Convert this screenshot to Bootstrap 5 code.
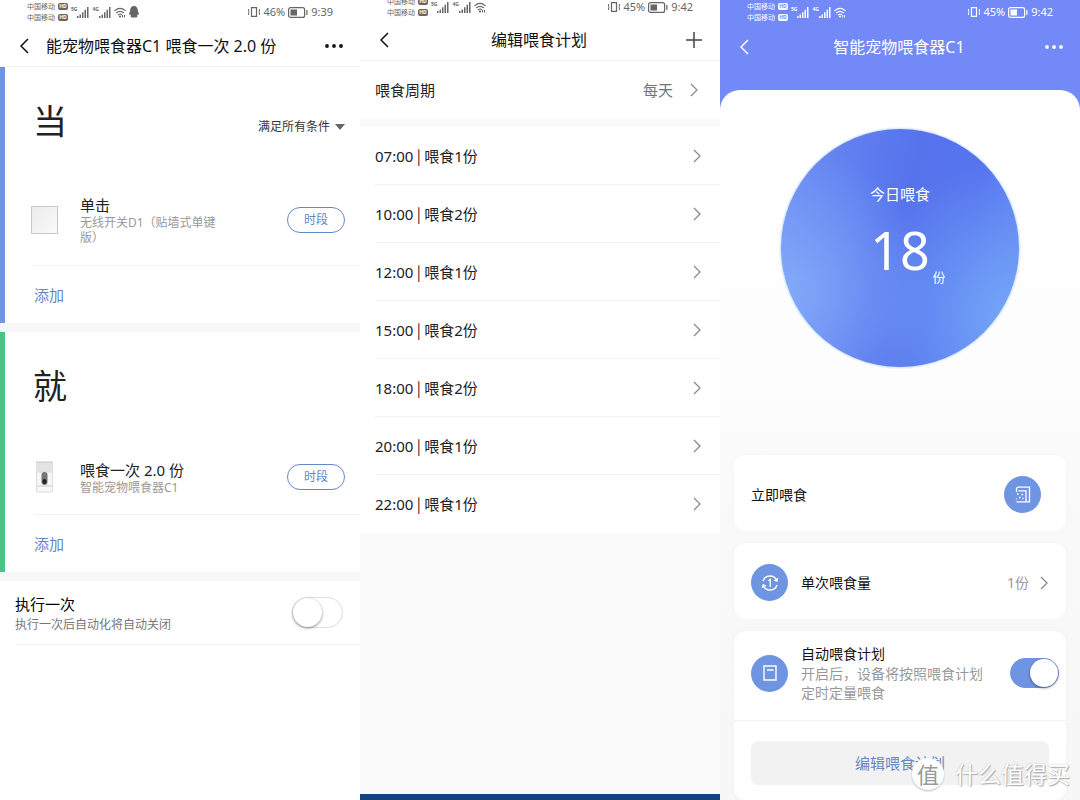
<!DOCTYPE html>
<html lang="zh-CN">
<head>
<meta charset="utf-8">
<meta name="viewport" content="width=device-width, initial-scale=1">
<title>智能宠物喂食器C1</title>
<link href="https://cdn.jsdelivr.net/npm/bootstrap@5.3.0/dist/css/bootstrap.min.css" rel="stylesheet">
<style>
  :root { --blue: #6f94e2; --link: #6487c6; --line: #f2f2f2; --gap: #f7f7f7; }
  body { font-family: "Noto Sans", "Noto Sans CJK SC", sans-serif; font-size: 15px; line-height: 20px; color: #222; }
  a { text-decoration: none; }
  svg { flex: none; display: block; }
  .phone { min-height: 100vh; background: #fff; }

  /* status bar */
  .status { height: 24px; padding: 0 27px; color: #666; font-size: 11px; }
  .status-short { height: 18px; padding-bottom: 4px; }
  .net, .power { display: flex; align-items: center; gap: 3px; }
  .signal { display: flex; align-items: center; }
  .carrier { font-size: 7px; line-height: 11px; white-space: nowrap; }
  .carrier div { display: flex; align-items: center; gap: 3px; }
  .hd { width: 10px; height: 7px; border-radius: 2px; background: currentColor; }
  .hd b { color: #fff; font-size: 5px; line-height: 7px; display: block; text-align: center; }
  .gen { font-size: 5px; line-height: 5px; font-weight: 700; padding-bottom: 6px; }

  /* title bar */
  .topbar { height: 43px; padding: 2px 16px 0 18px; border-bottom: 1px solid var(--line); color: #111; font-size: 16px; }
  .topbar button, .plain { border: 0; background: none; padding: 0; color: inherit; }
  .topbar h1 { font-size: 16px; line-height: 24px; font-weight: 400; margin: 0; white-space: nowrap; }
  .more { color: #555; }

  /* automation screen */
  .rule { border-left: 5px solid var(--blue); }
  .rule-then { border-color: #4bc382; }
  .rule-head { height: 108px; padding: 0 15px 0 28px; }
  .rule-head h2 { font-size: 34px; line-height: 40px; font-weight: 400; margin: 0; }
  .match { padding-top: 12px; }
  .match select { appearance: none; border: 0; background: none; padding: 0; font-size: 12px; line-height: 20px; color: #333; }
  .rule-item { height: 90px; padding-right: 15px; }
  .rule-then .rule-item { height: 74px; }
  .thumb { width: 75px; padding-left: 26px; flex: none; }
  .sub { font-size: 12px; line-height: 15px; color: #999; }
  .desc { width: 140px; }
  .pill { width: 58px; height: 26px; padding: 0; border: 1px solid var(--link); border-radius: 13px; background: #fff; color: var(--link); font-size: 12px; line-height: 16px; flex: none; }
  .rule-add { height: 58px; margin-left: 29px; border-top: 1px solid var(--line); }
  .rule-add a { color: var(--link); }
  .band { height: 9px; background: var(--gap); }
  .once { height: 64px; margin-left: 15px; padding-right: 17px; border-bottom: 1px solid var(--line); }
  .once .sub { line-height: 22px; color: #777; }

  /* switches */
  .toggle.form-check-input { appearance: none; width: 51px; height: 31px; margin: 0; border: 1px solid #ddd; border-radius: 16px; background: #fff; flex: none; display: block; }
  .toggle.form-check-input::before { content: ""; display: block; width: 29px; height: 29px; border-radius: 50%; background: #fff; box-shadow: 0 1px 3px rgba(0,0,0,.45); }
  .toggle.form-check-input:checked { width: 49px; height: 30px; background: var(--blue); border-color: var(--blue); }
  .toggle.form-check-input:checked::before { width: 28px; height: 28px; margin-left: auto; }

  /* schedule screen */
  .schedule { background: #fafafa; }
  .schedule .status, .schedule .topbar, .period, .plan { background: #fff; }
  .period { height: 58px; padding: 0 21px 0 15px; }
  .plan a { height: 58px; margin-left: 15px; padding-right: 18px; color: #222; border-bottom: 1px solid var(--line); }
  .plan li:last-child a { border-color: transparent; }
  .sep { font-family: "Noto Sans CJK SC", sans-serif; }
  .foot { height: 6px; background: #10467c; }

  /* device screen */
  .device { background: #7389f7; }
  .device .status { color: #fff; }
  .device .hd b { color: #7389f7; }
  .device .topbar { color: #fff; border: 0; }
  .sheet { margin-top: 23px; padding: 39px 14px 0; border-radius: 20px 20px 0 0; background: linear-gradient(#fff 0, #fdfdfd 280px, #f9f9f9 420px, #f7f7f7 100%); }
  .dial { width: 238px; height: 238px; margin: 0 auto 88px; padding-top: 55px; border-radius: 50%; color: #fff; text-align: center;
    background: radial-gradient(circle at 98% 78%, #74a6f8 0, rgba(116,166,248,0) 52%), radial-gradient(circle at 0 68%, #83aaf9 0, rgba(131,170,249,0) 52%), linear-gradient(100deg, #6d8df3 0, #5673ec 50%, #5674ee 75%, #6385f2 100%);
    box-shadow: 0 0 2px 1px #c8e0fc; }
  .count { font-size: 52px; line-height: 72px; margin-top: 10px; }
  .unit { font-size: 13px; line-height: 18px; padding-left: 78px; margin-top: -18px; }
  .tile { background: #fff; border-radius: 12px; box-shadow: 0 0 8px rgba(0,0,0,.025); font-size: 14px; color: #111; margin-bottom: 12px; }
  .tile-row { height: 76px; padding: 3px 17px 0; }
  .tile:last-child { margin-bottom: 0; }
  .tile-text { margin-left: 13px; }
  .amount { color: #999; margin-right: 10px; }
  .disc { width: 37px; height: 37px; border-radius: 50%; color: #fff; flex: none; display: grid; place-items: center; }
  .disc, .plain.disc { background: var(--blue); }
  .auto { padding: 13px 7px 18px 17px; border-bottom: 1px solid var(--line); }
  .auto .note { color: #999; line-height: 19px; }
  .plain.edit { height: 44px; margin: 20px 17px 15px; border-radius: 8px; background: #f2f2f2; color: var(--link); font-size: 15px; }

  .stamp { right: 10px; bottom: 10px; gap: 11px; color: #fff; font-size: 23px; line-height: 32px; text-shadow: 1px 1px 1px #aaa, 0 0 2px #bbb; z-index: 2; pointer-events: none; }
  .stamp-logo { width: 32px; height: 32px; border-radius: 50%; background: #fff; color: #999; font-size: 22px; text-align: center; text-shadow: none; box-shadow: 0 1px 2px #bbb; }
</style>
</head>
<body>
<svg width="0" height="0" class="position-absolute" aria-hidden="true">
  <symbol id="bars" viewBox="0 0 12 11"><path fill="currentColor" d="M0 9h1.500v2H0zM2.500 7.500H4V11H2.500zM5 5.200h1.500V11H5zM7.500 2.800H9V11H7.500zM10 0h1.500v11H10z"/></symbol>
  <symbol id="wifi" viewBox="0 0 12 11"><g fill="none" stroke="currentColor" stroke-width="1.200" stroke-linecap="round"><path d="M.8 3.600Q6-.9 11.200 3.600M2.600 5.700Q6 2.900 9.400 5.700M4.300 7.700Q6 6.400 7.500 7.500"/></g><circle cx="6" cy="9.500" r="1.100" fill="currentColor"/><path fill="currentColor" d="M8 8h1v2.500H8zM10 8h1v2.500h-1z"/></symbol>
  <symbol id="qq" viewBox="0 0 10 12"><path fill="currentColor" d="M5 0C2.500 0 1.300 1.700 1.300 4L.2 7.400c-.4 1.500.2 1.700 1 .8.1.8.5 1.400 1 1.900-1.300.8-.5 1.700 2.800 1.400 3.300.3 4.100-.6 2.800-1.400.5-.5.9-1.100 1-1.900.8.9 1.400.7 1-.8L8.700 4C8.700 1.700 7.500 0 5 0z"/></symbol>
  <symbol id="vibrate" viewBox="0 0 12 10"><g fill="none" stroke="currentColor"><path d="M3.500.6h5v8.800h-5z" stroke-width="1.200"/><path d="M.6 2v2.500l.6.500-.6.500V8M11.400 2v2.500l-.6.500.6.500V8"/></g></symbol>
  <symbol id="battery" viewBox="0 0 20 11"><rect x=".6" y=".6" width="16" height="9.800" rx="2" fill="none" stroke="currentColor" stroke-width="1.200"/><path fill="currentColor" d="M2.500 2.500H9v6H2.500zM18.300 3h1.200v5h-1.200z"/></symbol>
  <symbol id="back" viewBox="0 0 12 18"><path d="M10 2 3 9l7 7" fill="none" stroke="currentColor" stroke-width="1.500"/></symbol>
  <symbol id="next" viewBox="0 0 10 14"><path d="m2 1 6 6-6 6" fill="none" stroke="#8a8a8a" stroke-width="1.300"/></symbol>
  <symbol id="dots" viewBox="0 0 20 6"><g fill="currentColor"><circle cx="3" cy="3" r="1.900"/><circle cx="10" cy="3" r="1.900"/><circle cx="17" cy="3" r="1.900"/></g></symbol>
</svg>

<main class="container-fluid p-0 position-relative overflow-hidden">
<div class="row g-0">

  <!-- automation -->
  <section class="col-4 phone d-flex flex-column">
    <div class="status d-flex align-items-center justify-content-between">
      <div class="net">
        <div class="carrier"><div>中国移动<span class="hd"><b>HD</b></span></div><div>中国移动<span class="hd"><b>HD</b></span></div></div>
        <div class="signal"><span class="gen">5G</span><svg width="12" height="11"><use href="#bars"/></svg></div>
        <div class="signal"><span class="gen">4G</span><svg width="12" height="11"><use href="#bars"/></svg></div>
        <svg width="12" height="11"><use href="#wifi"/></svg>
        <svg width="10" height="12"><use href="#qq"/></svg>
      </div>
      <div class="power"><svg width="12" height="10"><use href="#vibrate"/></svg><span>46%</span><svg width="20" height="11"><use href="#battery"/></svg><span>9:39</span></div>
    </div>
    <header class="topbar d-flex align-items-center">
      <button type="button" aria-label="返回"><svg width="12" height="18"><use href="#back"/></svg></button>
      <h1 class="ms-3 flex-grow-1">能宠物喂食器C1 喂食一次 2.0 份</h1>
      <button type="button" class="more" aria-label="更多"><svg width="20" height="6"><use href="#dots"/></svg></button>
    </header>

    <div class="rule">
      <div class="rule-head d-flex align-items-center justify-content-between">
        <h2>当</h2>
        <div class="match d-flex align-items-center gap-1">
          <select aria-label="触发条件"><option>满足所有条件</option></select>
          <svg width="10" height="6" viewBox="0 0 10 6"><path fill="#666" d="M0 0h10L5 6z"/></svg>
        </div>
      </div>
      <div class="rule-item d-flex align-items-center">
        <div class="thumb"><svg width="27" height="28" viewBox="0 0 27 28"><defs><linearGradient id="sw" x2="1" y2="1"><stop stop-color="#ebebeb"/><stop offset="1" stop-color="#fafafa"/></linearGradient></defs><rect x=".5" y=".5" width="26" height="27" fill="url(#sw)" stroke="#c9c9c9"/></svg></div>
        <div class="flex-grow-1"><div>单击</div><div class="sub desc">无线开关D1（贴墙式单键版）</div></div>
        <button type="button" class="pill">时段</button>
      </div>
      <div class="rule-add d-flex align-items-center"><a href="#">添加</a></div>
    </div>
    <div class="band"></div>
    <div class="rule rule-then">
      <div class="rule-head d-flex align-items-center"><h2>就</h2></div>
      <div class="rule-item d-flex align-items-center">
        <div class="thumb"><svg width="27" height="32" viewBox="0 0 27 32"><path d="M5 1h17v12H5z" fill="#e3e3e3"/><path d="M5 1h17" stroke="#c8c8c8"/><rect x="5.500" y="11" width="16" height="20" rx="1" fill="#f7f7f7" stroke="#ddd"/><path d="M6 25h15" stroke="#ccc"/><rect x="10.500" y="11" width="6" height="13" rx="3" fill="#777"/><rect x="11.500" y="18" width="4" height="5" rx="2" fill="#222"/></svg></div>
        <div class="flex-grow-1"><div>喂食一次 2.0 份</div><div class="sub">智能宠物喂食器C1</div></div>
        <button type="button" class="pill">时段</button>
      </div>
      <div class="rule-add d-flex align-items-center"><a href="#">添加</a></div>
    </div>
    <div class="band"></div>
    <div class="once d-flex align-items-center justify-content-between">
      <label for="once" class="pt-1"><span class="d-block text-black">执行一次</span><span class="sub d-block">执行一次后自动化将自动关闭</span></label>
      <input class="form-check-input toggle" type="checkbox" role="switch" id="once">
    </div>
  </section>

  <!-- schedule -->
  <section class="col-4 phone schedule d-flex flex-column">
    <div class="status status-short d-flex align-items-center justify-content-between">
      <div class="net">
        <div class="carrier"><div>中国移动<span class="hd"><b>HD</b></span></div><div>中国移动<span class="hd"><b>HD</b></span></div></div>
        <div class="signal"><span class="gen">5G</span><svg width="12" height="11"><use href="#bars"/></svg></div>
        <div class="signal"><span class="gen">4G</span><svg width="12" height="11"><use href="#bars"/></svg></div>
        <svg width="12" height="11"><use href="#wifi"/></svg>
      </div>
      <div class="power"><svg width="12" height="10"><use href="#vibrate"/></svg><span>45%</span><svg width="20" height="11"><use href="#battery"/></svg><span>9:42</span></div>
    </div>
    <header class="topbar d-flex align-items-center justify-content-between">
      <button type="button" aria-label="返回"><svg width="12" height="18"><use href="#back"/></svg></button>
      <h1 class="ps-1">编辑喂食计划</h1>
      <button type="button" aria-label="新增"><svg width="20" height="16" viewBox="0 0 20 16"><path d="M2 8h16M10 0v16" stroke="#444" stroke-width="1.500"/></svg></button>
    </header>
    <div class="period d-flex align-items-center">
      <span class="flex-grow-1">喂食周期</span><span class="text-secondary me-3">每天</span><svg width="10" height="14"><use href="#next"/></svg>
    </div>
    <ul class="plan list-unstyled mt-2 mb-0">
      <li><a href="#" class="d-flex align-items-center justify-content-between"><span>07:00<span class="sep"> | </span>喂食1份</span><svg width="10" height="14"><use href="#next"/></svg></a></li>
      <li><a href="#" class="d-flex align-items-center justify-content-between"><span>10:00<span class="sep"> | </span>喂食2份</span><svg width="10" height="14"><use href="#next"/></svg></a></li>
      <li><a href="#" class="d-flex align-items-center justify-content-between"><span>12:00<span class="sep"> | </span>喂食1份</span><svg width="10" height="14"><use href="#next"/></svg></a></li>
      <li><a href="#" class="d-flex align-items-center justify-content-between"><span>15:00<span class="sep"> | </span>喂食2份</span><svg width="10" height="14"><use href="#next"/></svg></a></li>
      <li><a href="#" class="d-flex align-items-center justify-content-between"><span>18:00<span class="sep"> | </span>喂食2份</span><svg width="10" height="14"><use href="#next"/></svg></a></li>
      <li><a href="#" class="d-flex align-items-center justify-content-between"><span>20:00<span class="sep"> | </span>喂食1份</span><svg width="10" height="14"><use href="#next"/></svg></a></li>
      <li><a href="#" class="d-flex align-items-center justify-content-between"><span>22:00<span class="sep"> | </span>喂食1份</span><svg width="10" height="14"><use href="#next"/></svg></a></li>
    </ul>
    <div class="foot mt-auto"></div>
  </section>

  <!-- device -->
  <section class="col-4 phone device d-flex flex-column">
    <div class="status d-flex align-items-center justify-content-between">
      <div class="net">
        <div class="carrier"><div>中国移动<span class="hd"><b>HD</b></span></div><div>中国移动<span class="hd"><b>HD</b></span></div></div>
        <div class="signal"><span class="gen">5G</span><svg width="12" height="11"><use href="#bars"/></svg></div>
        <div class="signal"><span class="gen">4G</span><svg width="12" height="11"><use href="#bars"/></svg></div>
        <svg width="12" height="11"><use href="#wifi"/></svg>
      </div>
      <div class="power"><svg width="12" height="10"><use href="#vibrate"/></svg><span>45%</span><svg width="20" height="11"><use href="#battery"/></svg><span>9:42</span></div>
    </div>
    <header class="topbar d-flex align-items-center justify-content-between">
      <button type="button" aria-label="返回"><svg width="12" height="18"><use href="#back"/></svg></button>
      <h1 class="ps-1">智能宠物喂食器C1</h1>
      <button type="button" aria-label="更多"><svg width="20" height="6"><use href="#dots"/></svg></button>
    </header>
    <div class="sheet flex-grow-1">
      <div class="dial">
        <div>今日喂食</div>
        <div class="count">18</div>
        <div class="unit">份</div>
      </div>
      <div class="tile tile-row d-flex align-items-center justify-content-between">
        <span>立即喂食</span>
        <button type="button" class="plain disc me-2" aria-label="立即喂食"><svg width="16" height="17" viewBox="0 0 16 17" fill="none" stroke="#fff" stroke-width="1.300"><path d="M1.500 6V3q0-1.800 2-1.800h11v14.600h-13M3.500 4.800h7.500v11"/><path d="M2 8h1.600M6.500 8.500h1.600M4 11.500h1.600M1.500 12.500v1M7.500 12.500h1.200"/></svg></button>
      </div>
      <div class="tile tile-row d-flex align-items-center">
        <span class="disc"><svg width="18" height="18" viewBox="0 0 18 18" fill="none" stroke="#fff" stroke-width="1.400"><path d="M2 7A7.300 7.300 0 0 1 15.700 6.500M16 11A7.300 7.300 0 0 1 2.300 11.500"/><path d="m17.300 3.800-1 4.200-3.800-1.600zM.7 14.200l1-4.200 3.800 1.600z" fill="#fff" stroke="none"/><path d="M7.300 6.700 9.300 5.400V13" stroke-width="1.300"/></svg></span>
        <span class="tile-text flex-grow-1">单次喂食量</span><span class="amount">1份</span><svg width="10" height="14"><use href="#next"/></svg>
      </div>
      <div class="tile">
        <div class="auto d-flex align-items-center">
          <span class="disc"><svg width="14" height="16" viewBox="0 0 14 16" fill="none" stroke="#fff" stroke-width="1.400"><path d="M1 1h12v14H1zM4 5h6.500"/></svg></span>
          <label for="auto" class="tile-text flex-grow-1"><span class="d-block">自动喂食计划</span><span class="note d-block">开启后，设备将按照喂食计划定时定量喂食</span></label>
          <input class="form-check-input toggle ms-4" type="checkbox" role="switch" id="auto" checked>
        </div>
        <div class="d-flex"><button type="button" class="plain edit flex-grow-1">编辑喂食计划</button></div>
      </div>
    </div>
  </section>
</div>
<div class="stamp position-absolute d-flex align-items-center"><span class="stamp-logo">值</span><span>什么值得买</span></div>
</main>
<script src="https://cdn.jsdelivr.net/npm/bootstrap@5.3.0/dist/js/bootstrap.bundle.min.js"></script>
</body>
</html>
